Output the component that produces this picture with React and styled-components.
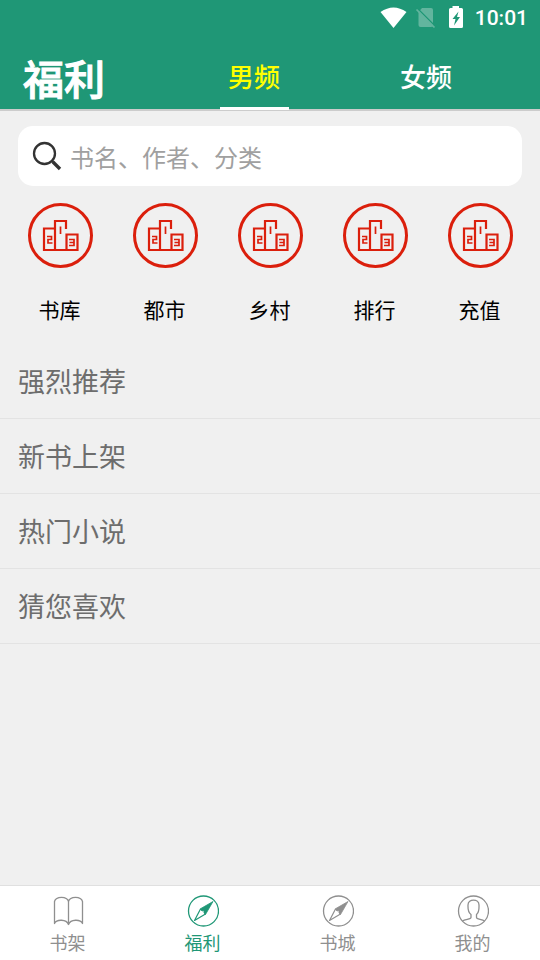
import React, { useState } from "react";
import styled, { createGlobalStyle } from "styled-components";

const channels = ["男频", "女频"];
const categories = ["书库", "都市", "乡村", "排行", "充值"];
const sections = ["强烈推荐", "新书上架", "热门小说", "猜您喜欢"];

function StatusIcons() {
  return (
    <svg width="84" height="24" viewBox="380 6 84 24" aria-hidden="true">
      <path d="M380.5 12 Q393.5 3 406.5 12 L393.5 28 Z" fill="#fff" />
      <path d="M422 8 H431 Q433 8 433 10 V27 L418.5 12 Z" fill="#62b59e" />
      <path d="M418.5 11 L433 26 Q432 27 431 27 H420.5 Q418.5 27 418.5 25 Z" fill="#62b59e" />
      <path d="M417 8 L436 27" stroke="#1f9776" strokeWidth="1.5" />
      <path d="M416.5 9.5 L434.5 27.5" stroke="#62b59e" strokeWidth="1.7" />
      <path
        d="M452.5 6 H459 V8 H461.5 Q463 8 463 9.5 V26.5 Q463 28 461.5 28 H450.5 Q449 28 449 26.5 V9.5 Q449 8 450.5 8 H452.5 Z"
        fill="#fff"
      />
      <path d="M458.5 11.5 L452.5 19 H455.5 L454 25.5 L460 17 H457 Z" fill="#1f9776" />
    </svg>
  );
}

function SearchIcon() {
  return (
    <svg width="30" height="30" viewBox="0 0 30 30" fill="none" stroke="#333" aria-hidden="true">
      <circle cx="12.5" cy="12.5" r="10.5" strokeWidth="2.3" />
      <path d="M19.5 19.5 L22 22" strokeWidth="2.3" />
      <path d="M21 21 L28 28" strokeWidth="3.3" />
    </svg>
  );
}

function PodiumIcon() {
  return (
    <svg width="66" height="66" viewBox="0 0 66 66" fill="none" stroke="#db1f0c" aria-hidden="true">
      <circle cx="33.5" cy="33.5" r="31" strokeWidth="3" />
      <g strokeWidth="2.2">
        <path d="M27.5 26.5 H17 V48 H50.5 V32.5 H39.5 V48" />
        <path d="M28 48 V19 H39 V27" />
      </g>
      <path d="M33.5 24.5 V32" strokeWidth="1.7" />
      <path d="M20 34.5 H24.5 V37.5 H21 V41 H25.5" strokeWidth="1.7" />
      <path d="M42 37.5 H47 V43.5 H42 M42.5 40.5 H47" strokeWidth="1.7" />
    </svg>
  );
}

function BookIcon() {
  return (
    <NavSvg viewBox="0 0 32 32" strokeWidth="1.3" aria-hidden="true">
      <path d="M16.5 6.5 V30 M16.5 6.5 C15 1 4 1 2.5 6.5 V28.5 C4.5 24 14.5 24 16.5 29.5 C18.5 24 28.5 24 30.5 28.5 V6.5 C29 1 18 1 16.5 6.5" />
    </NavSvg>
  );
}

function CompassIcon() {
  return (
    <NavSvg viewBox="0 0 32 32" strokeWidth="1.3" aria-hidden="true">
      <circle cx="16.5" cy="16" r="15" />
      <path d="M13.5 14 L7.5 25.5 L18.5 19" strokeWidth="1.2" />
      <path d="M26 6.5 L13 14 L15 16 L17 15.5 L17 18 L18.5 19.5 Z" fill="currentColor" strokeWidth="0.8" />
    </NavSvg>
  );
}

function PersonIcon() {
  return (
    <NavSvg viewBox="0 0 32 32" strokeWidth="1.3" aria-hidden="true">
      <circle cx="16.5" cy="16" r="15" />
      <path d="M5.5 26 C8 24 14 24.5 14 22.5 V19.5 C10.5 17 11 14 11 10 C11 3.5 22 3.5 22 10 C22 14 22.5 17 19.5 19.5 V22.5 C19.5 24.5 25 24 27.5 26" />
    </NavSvg>
  );
}

const navItems = [
  { label: "书架", Icon: BookIcon },
  { label: "福利", Icon: CompassIcon },
  { label: "书城", Icon: CompassIcon },
  { label: "我的", Icon: PersonIcon },
];

function App() {
  const [channel, setChannel] = useState("男频");
  const [page, setPage] = useState("福利");

  return (
    <Page>
      <GlobalStyle />
      <Header>
        <StatusBar>
          <StatusIcons />
          <Clock>10:01</Clock>
        </StatusBar>
        <TitleRow>
          <Title>福利</Title>
          <Tabs>
            {channels.map((name) => (
              <Tab key={name} $active={name === channel} onClick={() => setChannel(name)}>
                {name}
              </Tab>
            ))}
          </Tabs>
        </TitleRow>
      </Header>

      <Content>
        <SearchBox>
          <SearchIcon />
          <SearchInput type="text" aria-label="搜索" placeholder="书名、作者、分类" />
        </SearchBox>

        <Categories>
          {categories.map((name) => (
            <Category key={name}>
              <PodiumIcon />
              {name}
            </Category>
          ))}
        </Categories>

        {sections.map((name) => (
          <SectionTitle key={name}>{name}</SectionTitle>
        ))}
      </Content>

      <BottomNav>
        {navItems.map(({ label, Icon }) => (
          <NavButton key={label} $active={label === page} onClick={() => setPage(label)}>
            <Icon />
            {label}
          </NavButton>
        ))}
      </BottomNav>
    </Page>
  );
}

export default App;

/* ---------------- styles ---------------- */

const GlobalStyle = createGlobalStyle`
  * {
    box-sizing: border-box;
  }

  body {
    margin: 0;
    background: #f0f0f0;
  }

  body, button, input {
    font-family: "Noto Sans CJK SC", sans-serif;
  }

  button {
    margin: 0;
    padding: 0;
    border: 0;
    background: none;
    cursor: pointer;
  }
`;

const Page = styled.div`
  display: flex;
  flex-direction: column;
  min-height: 100vh;
`;

const Header = styled.header`
  background: #1f9776;
  color: #fff;
  border-bottom: 2px solid #ccc;
`;

const StatusBar = styled.div`
  display: flex;
  align-items: center;
  justify-content: flex-end;
  gap: 11px;
  height: 36px;
  padding-right: 12px;
`;

const Clock = styled.span`
  font-family: Roboto, sans-serif;
  font-weight: 500;
  font-size: 21px;
  line-height: 38px;
`;

const TitleRow = styled.div`
  display: flex;
  height: 73px;
  padding: 0 28px 0 23px;
`;

const Title = styled.h1`
  flex: 0 0 145px;
  margin: 0;
  font-weight: 500;
  font-size: 41px;
  line-height: 82px;
  -webkit-text-stroke: 1px currentColor;
`;

const Tabs = styled.nav`
  display: flex;
  flex: 1;
  justify-content: space-around;
`;

const Tab = styled.button`
  width: 69px;
  padding-top: 8px;
  font-weight: 500;
  font-size: 26px;
  color: ${(props) => (props.$active ? "#ffff00" : "#fff")};
  border-bottom: 3px solid ${(props) => (props.$active ? "#fff" : "transparent")};
  margin-bottom: -1px;
`;

const Content = styled.main`
  flex: 1;
`;

const SearchBox = styled.div`
  display: flex;
  align-items: center;
  gap: 8px;
  height: 60px;
  margin: 15px 18px 0;
  padding: 0 14px;
  border-radius: 15px;
  background: #fff;
`;

const SearchInput = styled.input`
  flex: 1;
  min-width: 0;
  height: 100%;
  padding: 0;
  border: 0;
  outline: 0;
  background: none;
  font-size: 24px;
  color: #333;

  &::placeholder {
    color: #a0a0a0;
    opacity: 1;
  }
`;

const Categories = styled.div`
  display: grid;
  grid-template-columns: repeat(5, 1fr);
  padding: 16px 8px 0 7px;
`;

const Category = styled.button`
  display: flex;
  flex-direction: column;
  align-items: center;
  gap: 25px;
  height: 142px;
  font-size: 21px;
  line-height: 32px;
  color: #000;
`;

const SectionTitle = styled.h2`
  margin: 0;
  padding: 0 18px;
  font-weight: 400;
  font-size: 27px;
  line-height: 74px;
  color: #6d6d6d;
  border-bottom: 1px solid #e3e3e3;
`;

const BottomNav = styled.nav`
  display: grid;
  grid-template-columns: repeat(4, 1fr);
  height: 75px;
  background: #fff;
  border-top: 1px solid #e0e0e0;
`;

const NavSvg = styled.svg`
  width: 32px;
  height: 32px;
  fill: none;
  stroke: currentColor;
  stroke-linejoin: round;
`;

const NavButton = styled.button`
  display: flex;
  flex-direction: column;
  align-items: center;
  padding-top: 9px;
  gap: 1px;
  font-size: 18px;
  line-height: 28px;
  color: ${(props) => (props.$active ? "#1f9776" : "#8f8f8f")};
`;
